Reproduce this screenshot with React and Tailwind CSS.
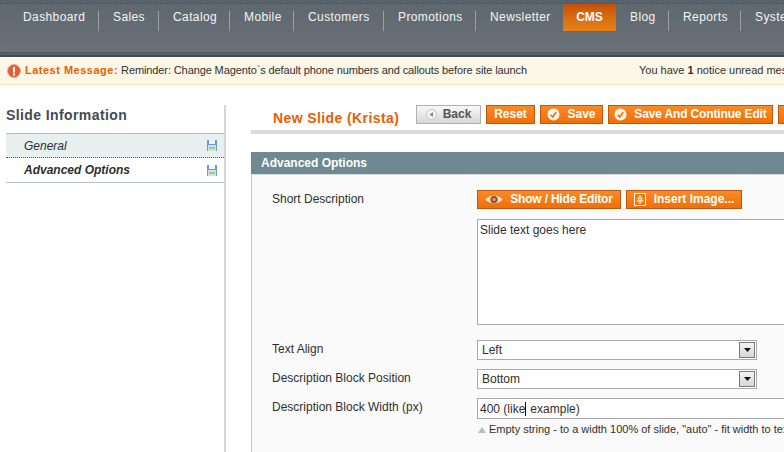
const navItems = [
  { label: "Dashboard", w: "w-[90px]" },
  { label: "Sales", w: "w-[60px]" },
  { label: "Catalog", w: "w-[71px]" },
  { label: "Mobile", w: "w-[64px]" },
  { label: "Customers", w: "w-[90px]" },
  { label: "Promotions", w: "w-[92px]" },
  { label: "Newsletter", w: "w-[87px]" },
  { label: "CMS", w: "w-[53px]", active: true },
  { label: "Blog", w: "w-[53px]" },
  { label: "Reports", w: "w-[72px]" },
  { label: "System", w: "w-[72px]" },
];

const SaveIcon = () => (
  <svg width="10" height="11" viewBox="0 0 10 11">
    <rect x="0" y="0" width="10" height="11" fill="#6c9bd0" />
    <rect x="2" y="0" width="6" height="4" fill="#eef4fa" />
    <rect x="1" y="5" width="8" height="6" fill="#cfe0ef" />
    <rect x="2" y="7" width="6" height="2" fill="#a9cf62" />
  </svg>
);

const CheckIcon = () => (
  <svg width="13" height="13" viewBox="0 0 13 13">
    <circle cx="6.5" cy="6.5" r="6" fill="#fff4e6" />
    <path d="M3.8 6.8 L5.8 9 L9.2 4.3" fill="none" stroke="#e8730f" strokeWidth="1.7" />
  </svg>
);

const EyeIcon = () => (
  <svg width="18" height="11" viewBox="0 0 18 11">
    <path d="M0.5 5.5 C4 0.5 14 0.5 17.5 5.5 C14 10.5 4 10.5 0.5 5.5 Z" fill="#f7e4cf" />
    <circle cx="9" cy="5.5" r="3.6" fill="#8f4a22" />
    <circle cx="9" cy="5.5" r="1.8" fill="#e9905a" />
  </svg>
);

const ImageIcon = () => (
  <svg width="12" height="13" viewBox="0 0 12 13">
    <rect x="0.5" y="0.5" width="11" height="12" fill="#f0780f" stroke="#fff" />
    <path d="M6 2 L9.2 6 L7.6 6 L9.6 8.8 L6.7 8.8 L6.7 11 L5.3 11 L5.3 8.8 L2.4 8.8 L4.4 6 L2.8 6 Z" fill="#fbe3cb" />
    <path d="M4.5 4.5 L7.5 7 M7.5 3.8 L4.5 7.6" stroke="#f0780f" strokeWidth="0.7" />
  </svg>
);

const OrangeButton = ({ children, className = "" }) => (
  <button
    className={`h-[19px] shrink-0 flex items-center justify-center pb-[1px] border border-[#c2570c] bg-gradient-to-b from-[#f98a25] to-[#f06f05] text-white font-bold text-[12px] whitespace-nowrap ${className}`}
  >
    {children}
  </button>
);

const SelectBox = ({ value }) => (
  <div className="w-[280px] h-[20px] flex items-center justify-between bg-white border border-[#aaaaaa] pl-[4px] pr-[1px] text-[12px] text-[#2f2f2f]">
    <span>{value}</span>
    <span className="w-[16px] h-[16px] flex items-center justify-center border border-[#777b80] bg-gradient-to-b from-[#f4f4f4] to-[#d6d6d6]">
      <svg width="7" height="4" viewBox="0 0 7 4">
        <path d="M0 0 H7 L3.5 4 Z" fill="#111" />
      </svg>
    </span>
  </div>
);

const FormRow = ({ label, className = "", children }) => (
  <div className={`flex ${className}`}>
    <label className="w-[205px] shrink-0 text-[12px] text-[#2f2f2f] leading-[14px] pt-[2px]">{label}</label>
    <div className="shrink-0">{children}</div>
  </div>
);

const App = () => {
  return (
    <div className="w-[784px] h-[452px] overflow-hidden bg-white text-[12px] text-[#2f2f2f] font-['Liberation_Sans',Arial,sans-serif]">
      <header className="h-[57px] flex flex-col bg-gradient-to-b from-[#5f676e] to-[#6a7178] border-b-[2px] border-[#34505c]">
        <div className="h-[4px] border-b border-dashed border-[#41596a] bg-[#58626a]" />
        <nav className="flex-1 flex pl-[9px]">
          {navItems.map((item, index) => {
            const next = navItems[index + 1];
            const hideSep = item.active || (next && next.active) || index === navItems.length - 1;
            return (
              <div
                key={item.label}
                className={`${item.w} shrink-0 h-[27px] flex items-start relative ${
                  item.active
                    ? "justify-center bg-gradient-to-b from-[#c64f07] via-[#d96c10] to-[#e68016] font-bold text-white"
                    : "pl-[14px] text-[#f2f4f5] tracking-[0.4px]"
                }`}
              >
                <span className="pt-[6px] leading-[14px] whitespace-nowrap">{item.label}</span>
                {!hideSep && <span className="absolute right-0 top-[7px] w-px h-[20px] bg-[#99a2a8]" />}
              </div>
            );
          })}
        </nav>
        <div className="h-[3px] border-t border-dotted border-[#4c5359] bg-[#565d64]" />
      </header>

      <div className="h-[28px] flex items-center justify-between bg-[#fdf7e7] border-b border-[#efdfb8] pl-[7px] whitespace-nowrap text-[11px]">
        <div className="flex items-center">
          <svg width="14" height="14" viewBox="0 0 14 14" className="mr-[4px]">
            <circle cx="7" cy="7" r="6.5" fill="#e0603a" stroke="#eba98f" />
            <rect x="6" y="3" width="2" height="5.5" fill="#fff" />
            <rect x="6" y="9.5" width="2" height="2" fill="#fff" />
          </svg>
          <span className="font-bold text-[#eb5e00] mr-[3px] tracking-[0.5px]">Latest Message:</span>
          <span className="tracking-[-0.11px]">Reminder: Change Magento`s default phone numbers and callouts before site launch</span>
        </div>
        <div className="w-[145px] overflow-hidden shrink-0">
          You have <b>1</b> notice unread message
        </div>
      </div>

      <div className="flex pt-[20px]">
        <aside className="w-[226px] shrink-0 h-[400px] border-r-[2px] border-[#d6d6d6]">
          <h3 className="pl-[6px] h-[28px] text-[14px] leading-[20px] font-bold text-[#444b4f] tracking-[0.4px]">Slide Information</h3>
          <div className="ml-[6px]">
            <div className="h-[25px] flex items-center justify-between pl-[18px] pr-[7px] bg-[#e7efef] border-t border-[#b5bcc0] border-b border-b-[#555] border-dotted [border-top-style:solid] italic text-[#2f2f2f]">
              General
              <SaveIcon />
            </div>
            <div className="h-[25px] flex items-center justify-between pl-[18px] pr-[7px] border-b border-[#b9bec2] italic font-bold text-[#2f2f2f]">
              Advanced Options
              <SaveIcon />
            </div>
          </div>
        </aside>

        <main className="ml-[25px] w-[600px] shrink-0">
          <div className="flex items-start h-[25px] border-b-[4px] border-[#dcdcdc] box-content">
            <h3 className="w-[143px] ml-[22px] shrink-0 pt-[4px] text-[14px] leading-[18px] font-bold text-[#eb5e00] tracking-[0.4px] whitespace-nowrap">
              New Slide (Krista)
            </h3>
            <div className="flex gap-[5px]">
              <button className="w-[65px] h-[19px] flex items-center justify-center gap-[6px] pb-[1px] border border-[#b0b0b0] bg-gradient-to-b from-[#f8f8f8] to-[#d8d8d8] text-[#555] font-bold text-[12px]">
                <svg width="11" height="11" viewBox="0 0 11 11">
                  <circle cx="5.5" cy="5.5" r="5" fill="#f5f5f5" stroke="#c4c4c4" />
                  <path d="M7 3 V8 L3.5 5.5 Z" fill="#888" />
                </svg>
                Back
              </button>
              <OrangeButton className="w-[49px]">Reset</OrangeButton>
              <OrangeButton className="w-[63px] gap-[7px]">
                <CheckIcon />
                Save
              </OrangeButton>
              <OrangeButton className="w-[165px] gap-[7px]">
                <CheckIcon />
                <span className="tracking-[-0.15px]">Save And Continue Edit</span>
              </OrangeButton>
              <OrangeButton className="w-[60px]" />
            </div>
          </div>

          <div className="mt-[18px] h-[22px] pl-[10px] flex items-center bg-[#6f8992] text-white font-bold text-[12px]">Advanced Options</div>
          <div className="h-[280px] bg-[#fafafa] border-l border-t border-l-[#c8c8c8] border-t-[#d8dde0] pl-[20px] pt-[15px]">
            <FormRow label="Short Description">
              <div className="flex gap-[5px]">
                <OrangeButton className="w-[144px] gap-[7px]">
                  <EyeIcon />
                  <span className="tracking-[-0.2px]">Show / Hide Editor</span>
                </OrangeButton>
                <OrangeButton className="w-[116px] gap-[8px]">
                  <ImageIcon />
                  Insert Image...
                </OrangeButton>
              </div>
              <textarea
                readOnly
                value="Slide text goes here"
                className="block mt-[10px] w-[340px] h-[106px] bg-white border border-[#aaaaaa] px-[2px] pt-[1px] text-[12px] text-[#2f2f2f] outline-none resize-none"
              />
            </FormRow>
            <FormRow label="Text Align" className="mt-[15px]">
              <SelectBox value="Left" />
            </FormRow>
            <FormRow label="Description Block Position" className="mt-[9px]">
              <SelectBox value="Bottom" />
            </FormRow>
            <FormRow label="Description Block Width (px)" className="mt-[9px]">
              <div className="w-[340px] h-[21px] flex items-center bg-white border border-[#aaaaaa] pl-[2px] text-[12px] text-[#2f2f2f]">
                400 (like
                <span className="w-px h-[14px] bg-[#111]" />
                <span className="ml-[4px]">example)</span>
              </div>
              <p className="mt-[4px] flex items-center gap-[3px] text-[11px] leading-[13px] whitespace-nowrap">
                <svg width="8" height="6" viewBox="0 0 8 6" className="ml-[1px]">
                  <path d="M4 0 L8 6 H0 Z" fill="#b4c0c5" />
                </svg>
                Empty string - to a width 100% of slide, "auto" - fit width to text
              </p>
            </FormRow>
          </div>
        </main>
      </div>
    </div>
  );
};

export default App;
